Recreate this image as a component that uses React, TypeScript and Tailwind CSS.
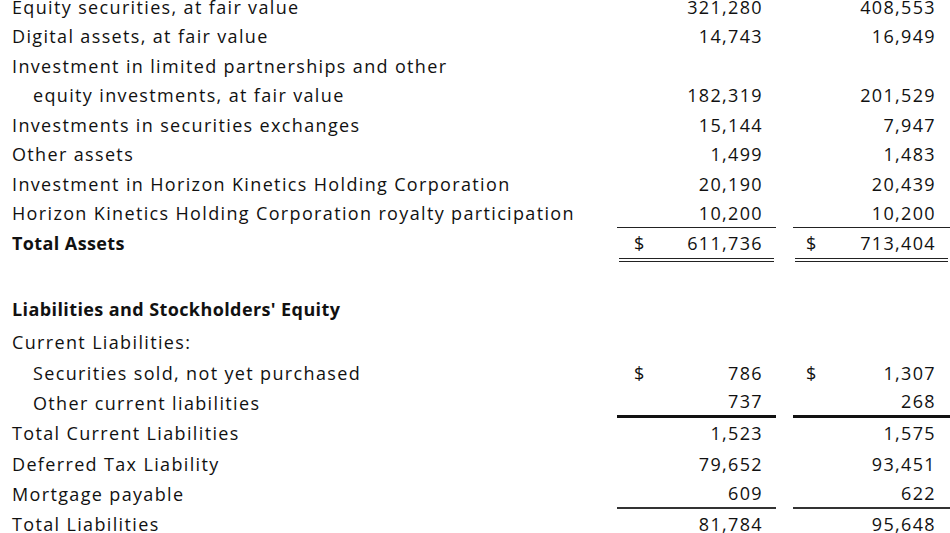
import React from "react";

type Row = {
  label?: string;
  indent?: boolean;
  bold?: boolean;
  d1?: boolean;
  v1?: string;
  d2?: boolean;
  v2?: string;
  h: string;
  line?: "thin" | "thick" | "mid" | "double";
};

const rows: Row[] = [
  { label: "Equity securities, at fair value", v1: "321,280", v2: "408,553", h: "h-[30px]" },
  { label: "Digital assets, at fair value", v1: "14,743", v2: "16,949", h: "h-[29px]" },
  { label: "Investment in limited partnerships and other", h: "h-[30px]" },
  { label: "equity investments, at fair value", indent: true, v1: "182,319", v2: "201,529", h: "h-[29px]" },
  { label: "Investments in securities exchanges", v1: "15,144", v2: "7,947", h: "h-[30px]" },
  { label: "Other assets", v1: "1,499", v2: "1,483", h: "h-[29px]" },
  { label: "Investment in Horizon Kinetics Holding Corporation", v1: "20,190", v2: "20,439", h: "h-[30px]" },
  { label: "Horizon Kinetics Holding Corporation royalty participation", v1: "10,200", v2: "10,200", h: "h-[29px]", line: "thin" },
  { label: "Total Assets", bold: true, d1: true, v1: "611,736", d2: true, v2: "713,404", h: "h-[30px]", line: "double" },
  { h: "h-[35px]" },
  { label: "Liabilities and Stockholders' Equity", bold: true, h: "h-[33px]" },
  { label: "Current Liabilities:", h: "h-[32px]" },
  { label: "Securities sold, not yet purchased", indent: true, d1: true, v1: "786", d2: true, v2: "1,307", h: "h-[30px]" },
  { label: "Other current liabilities", indent: true, v1: "737", v2: "268", h: "h-[30px]", line: "thick" },
  { label: "Total Current Liabilities", v1: "1,523", v2: "1,575", h: "h-[31px]" },
  { label: "Deferred Tax Liability", v1: "79,652", v2: "93,451", h: "h-[30px]" },
  { label: "Mortgage payable", v1: "609", v2: "622", h: "h-[30px]", line: "mid" },
  { label: "Total Liabilities", v1: "81,784", v2: "95,648", h: "h-[30px]" },
];

function Cell({ d, v, line, right }: { d?: boolean; v?: string; line?: Row["line"]; right?: boolean }) {
  const border =
    line === "thin"
      ? "border-b border-[#222]"
      : line === "thick"
      ? "border-b-[3px] border-[#111]"
      : line === "mid"
      ? "border-b-2 border-[#333]"
      : "";
  return (
    <div className={`relative flex items-center h-full ${border}`}>
      <span className={`w-[28px] ${right ? "pl-[13px]" : "pl-[17px]"}`}>{d ? "$" : ""}</span>
      <span className={`flex-1 text-right ${right ? "pr-[14px]" : "pr-[13px]"}`}>{v ?? ""}</span>
      {line === "double" && (
        <div className="absolute left-[2px] right-[2px] bottom-[-4px] h-[4px] border-t border-b border-[#222]" />
      )}
    </div>
  );
}

export default function App() {
  return (
    <div
      className="w-[950px] h-[533px] overflow-hidden bg-white text-[#111] text-[18px] tracking-[1.35px]"
      style={{ fontFamily: '"Open Sans", "Liberation Sans", sans-serif' }}
    >
      <div className="-mt-[8px]">
        {rows.map((r, i) => (
          <div key={i} className={`grid grid-cols-[617px_159px_17px_157px] ${r.h}`}>
            <div
              className={`flex items-center whitespace-nowrap ${r.indent ? "pl-[33px]" : "pl-[12px]"} ${
                r.bold ? "font-bold tracking-[0.4px]" : ""
              }`}
            >
              {r.label ?? ""}
            </div>
            <Cell d={r.d1} v={r.v1} line={r.line} />
            <div />
            <Cell d={r.d2} v={r.v2} line={r.line} right />
          </div>
        ))}
      </div>
    </div>
  );
}
